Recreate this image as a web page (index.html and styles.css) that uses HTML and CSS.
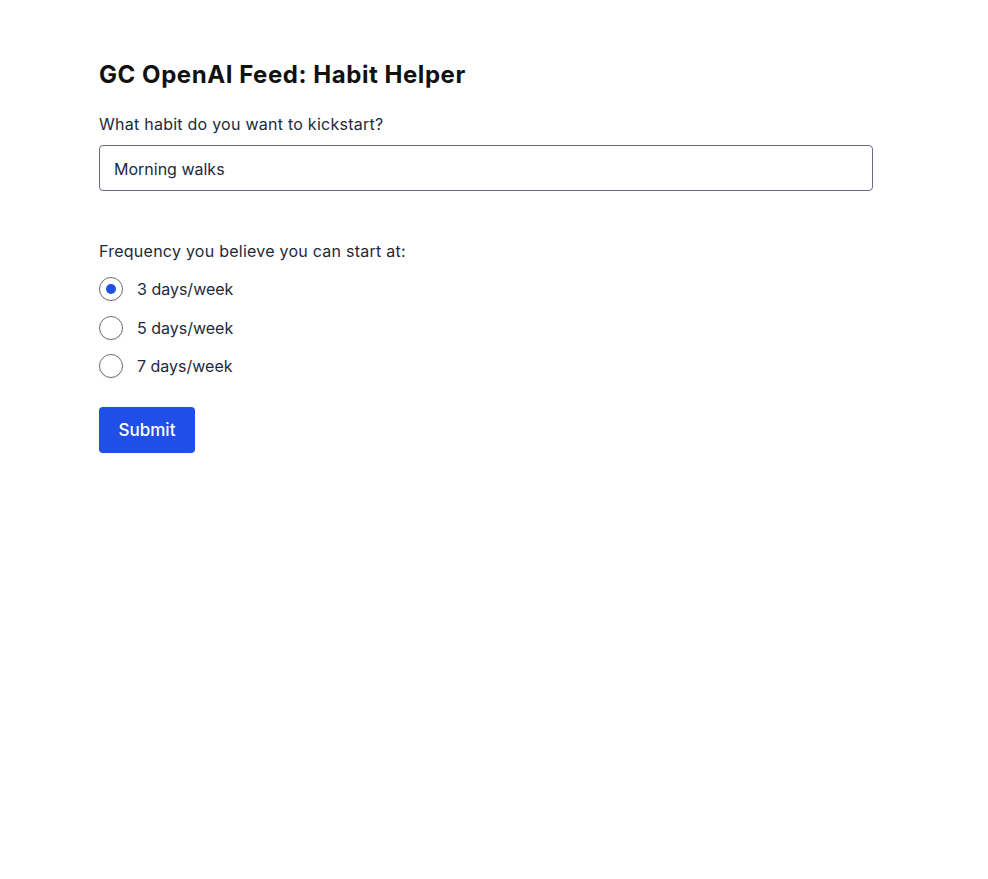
FILE: index.html
```html
<!DOCTYPE html>
<html lang="en">
<head>
<meta charset="utf-8">
<title>GC OpenAI Feed: Habit Helper</title>
<link rel="stylesheet" href="styles.css">
</head>
<body>
<main class="page">
  <h1 class="title">GC OpenAI Feed: Habit Helper</h1>
  <form class="form">
    <div class="field">
      <label class="label" for="habit">What habit do you want to kickstart?</label>
      <input class="input" id="habit" type="text" value="Morning walks">
    </div>
    <fieldset class="group">
      <legend class="label">Frequency you believe you can start at:</legend>
      <div class="options">
        <label class="option"><span class="radio checked"></span><span>3 days/week</span></label>
        <label class="option"><span class="radio"></span><span>5 days/week</span></label>
        <label class="option"><span class="radio"></span><span>7 days/week</span></label>
      </div>
    </fieldset>
    <div><button class="submit" type="button">Submit</button></div>
  </form>
</main>
</body>
</html>
```
FILE: styles.css
```css
html, body {
  margin: 0;
  padding: 0;
  background: #ffffff;
}
body {
  font-family: "Inter", "Noto Sans", sans-serif;
  color: #1e293b;
}
.page {
  padding: 59px 0 0 99px;
  width: 774px;
}
.title {
  margin: 0;
  font-size: 24px;
  line-height: 32px;
  font-weight: 700;
  color: #111111;
  letter-spacing: 0.55px;
}
.form {
  display: flex;
  flex-direction: column;
  margin-top: 21px;
}
.field {
  display: flex;
  flex-direction: column;
  gap: 9px;
}
.label {
  font-size: 16px;
  line-height: 24px;
  color: #1e293b;
  padding: 0;
  letter-spacing: 0.25px;
}
.input {
  box-sizing: border-box;
  width: 774px;
  height: 46px;
  border: 1px solid #6b6b80;
  border-radius: 4px;
  padding: 2px 14px 0;
  font: inherit;
  font-size: 16px;
  color: #1e293b;
  outline: none;
}
.group {
  border: 0;
  margin: 48px 0 0;
  padding: 0;
  min-width: 0;
}
.group .label {
  margin-bottom: 14px;
}
.options {
  display: flex;
  flex-direction: column;
  gap: 14.5px;
}
.option {
  display: flex;
  align-items: center;
  gap: 14px;
  font-size: 16px;
  line-height: 24px;
  color: #1e293b;
}
.radio {
  box-sizing: border-box;
  width: 24px;
  height: 24px;
  border: 1px solid #6b6b76;
  border-radius: 50%;
  display: flex;
  align-items: center;
  justify-content: center;
  box-shadow: 0 1px 2px rgba(0,0,0,0.08);
}
.radio.checked::after {
  content: "";
  width: 10px;
  height: 10px;
  border-radius: 50%;
  background: #1f4fe6;
}
.submit {
  margin-top: 29px;
  width: 96px;
  height: 46px;
  border: 0;
  border-radius: 4px;
  background: #1f4fe6;
  color: #ffffff;
  font: inherit;
  font-size: 17px;
  font-weight: 500;
  cursor: pointer;
}
```
